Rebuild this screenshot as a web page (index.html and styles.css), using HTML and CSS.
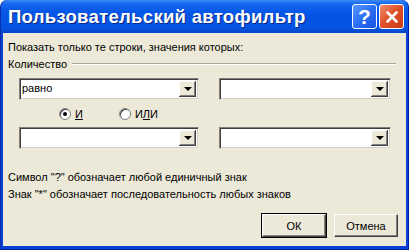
FILE: index.html
```html
<!DOCTYPE html>
<html lang="ru">
<head>
    <meta charset="UTF-8">
    <title>Пользовательский автофильтр</title>
    <link rel="stylesheet" href="styles.css">
</head>
<body>
    <div class="window">
        <div class="titlebar">
            <span class="title">Пользовательский автофильтр</span>
            <div class="caption-buttons">
                <div class="cap-btn help">?</div>
                <div class="cap-btn close">
                    <svg width="14" height="14" viewBox="0 0 14 14">
                        <path d="M2.5 2.5 L11.5 11.5 M11.5 2.5 L2.5 11.5" stroke="#fff" stroke-width="2.6" stroke-linecap="round"/>
                    </svg>
                </div>
            </div>
        </div>
        <div class="client">
            <div class="caption">Показать только те строки, значения которых:</div>
            <div class="group">
                <span>Количество</span>
                <div class="groove"></div>
            </div>
            <div class="row">
                <div class="combo wide"><span class="value">равно</span><div class="drop"><i></i></div></div>
                <div class="combo"><span class="value"></span><div class="drop"><i></i></div></div>
            </div>
            <div class="radios">
                <label class="radio"><span class="dot checked"></span><span><u>И</u></span></label>
                <label class="radio"><span class="dot"></span><span>И<u>Л</u>И</span></label>
            </div>
            <div class="row second">
                <div class="combo wide"><span class="value"></span><div class="drop"><i></i></div></div>
                <div class="combo"><span class="value"></span><div class="drop"><i></i></div></div>
            </div>
            <div class="hint">Символ "?" обозначает любой единичный знак</div>
            <div class="hint">Знак "*" обозначает последовательность любых знаков</div>
            <div class="actions">
                <button class="btn default">ОК</button>
                <button class="btn">Отмена</button>
            </div>
        </div>
    </div>
</body>
</html>
```

FILE: styles.css
```css
body {
    margin: 0;
    width: 409px;
    height: 250px;
    overflow: hidden;
    font-family: "Liberation Sans", Arial, sans-serif;
}
.window {
    width: 409px;
    height: 250px;
    box-sizing: border-box;
    display: flex;
    flex-direction: column;
    background: #0a3fd8;
    border-radius: 7px 7px 0 0;
    border-left: 1px solid #0831a8;
    border-right: 1px solid #001ea0;
    border-bottom: 1px solid #001ea0;
}
.titlebar {
    height: 33px;
    display: flex;
    align-items: center;
    justify-content: space-between;
    padding: 0 4px 0 7px;
    border-radius: 7px 7px 0 0;
    background: linear-gradient(#3c8cf8 0%, #1566ee 12%, #0758e8 35%, #0453e3 60%, #0553e0 85%, #0646c8 100%);
}
.title {
    color: #fff;
    font-size: 18.5px;
    font-weight: bold;
    text-shadow: 1px 1px 0 #0a2a8a;
    letter-spacing: 0.3px;
}
.caption-buttons {
    display: flex;
    gap: 2px;
}
.cap-btn {
    width: 25px;
    height: 25px;
    box-sizing: border-box;
    border: 1px solid #fff;
    border-radius: 3px;
    display: flex;
    align-items: center;
    justify-content: center;
}
.help {
    color: #fff;
    font-size: 21px;
    font-weight: bold;
    background: linear-gradient(135deg, #5b9aff 0%, #2a6ef5 50%, #1a55de 100%);
}
.close {
    background: linear-gradient(135deg, #f0906e 0%, #e0532a 45%, #c93b12 100%);
}
.client {
    flex: 1;
    margin: 0 2px 3px;
    background: #ece9d8;
    padding: 7px 8px 0 5px;
    font-size: 11px;
    color: #000;
}
.caption {
    line-height: 14px;
}
.group {
    display: flex;
    align-items: center;
    margin-top: 3px;
    line-height: 14px;
}
.groove {
    flex: 1;
    margin-left: 5px;
    margin-right: 2px;
    border-top: 1px solid #aca899;
    border-bottom: 1px solid #fff;
}
.row {
    display: flex;
    gap: 20px;
    margin: 7px 0 0 11px;
}
.row.second {
    margin-top: 6px;
}
.combo {
    display: flex;
    height: 22px;
    box-sizing: border-box;
    background: #fff;
    border-top: 1px solid #808080;
    border-left: 1px solid #808080;
    border-right: 1px solid #ece9d8;
    border-bottom: 1px solid #ece9d8;
    box-shadow: inset 1px 1px 0 #404040, inset -1px -1px 0 #d4d0c8;
    width: 172px;
}
.combo.wide {
    width: 180px;
}
.value {
    flex: 1;
    padding: 3px 2px 0;
    font-size: 11px;
}
.drop {
    width: 17px;
    margin: 2px 2px 2px 0;
    background: #ece9d8;
    box-shadow: inset -1px -1px 0 #404040, inset 1px 1px 0 #fff, inset -2px -2px 0 #808080;
    display: flex;
    align-items: center;
    justify-content: center;
}
.drop i {
    width: 0;
    height: 0;
    border-left: 4px solid transparent;
    border-right: 4px solid transparent;
    border-top: 4px solid #000;
}
.radios {
    display: flex;
    gap: 36px;
    margin: 7px 0 0 51px;
    line-height: 14px;
}
.radio {
    display: flex;
    align-items: center;
    gap: 4px;
}
.radio u {
    text-decoration: underline;
}
.dot {
    width: 10px;
    height: 10px;
    border-radius: 50%;
    background: #fff;
    border: 1px solid #808080;
    box-shadow: inset 1px 1px 0 #404040;
    display: flex;
    align-items: center;
    justify-content: center;
}
.dot.checked::after {
    content: "";
    width: 4px;
    height: 4px;
    border-radius: 50%;
    background: #000;
}
.hint {
    line-height: 17px;
}
.row.second + .hint {
    margin-top: 20px;
}
.actions {
    display: flex;
    justify-content: flex-end;
    gap: 8px;
    margin-top: 11px;
}
.btn {
    font-family: "Liberation Sans", Arial, sans-serif;
    font-size: 11px;
    width: 64px;
    height: 23px;
    background: #ece9d8;
    border: 1px solid #fff;
    border-right-color: #404040;
    border-bottom-color: #404040;
    box-shadow: inset -1px -1px 0 #808080;
    padding: 0;
    color: #000;
}
.btn.default {
    outline: 1px solid #000;
    outline-offset: 0;
}
```
